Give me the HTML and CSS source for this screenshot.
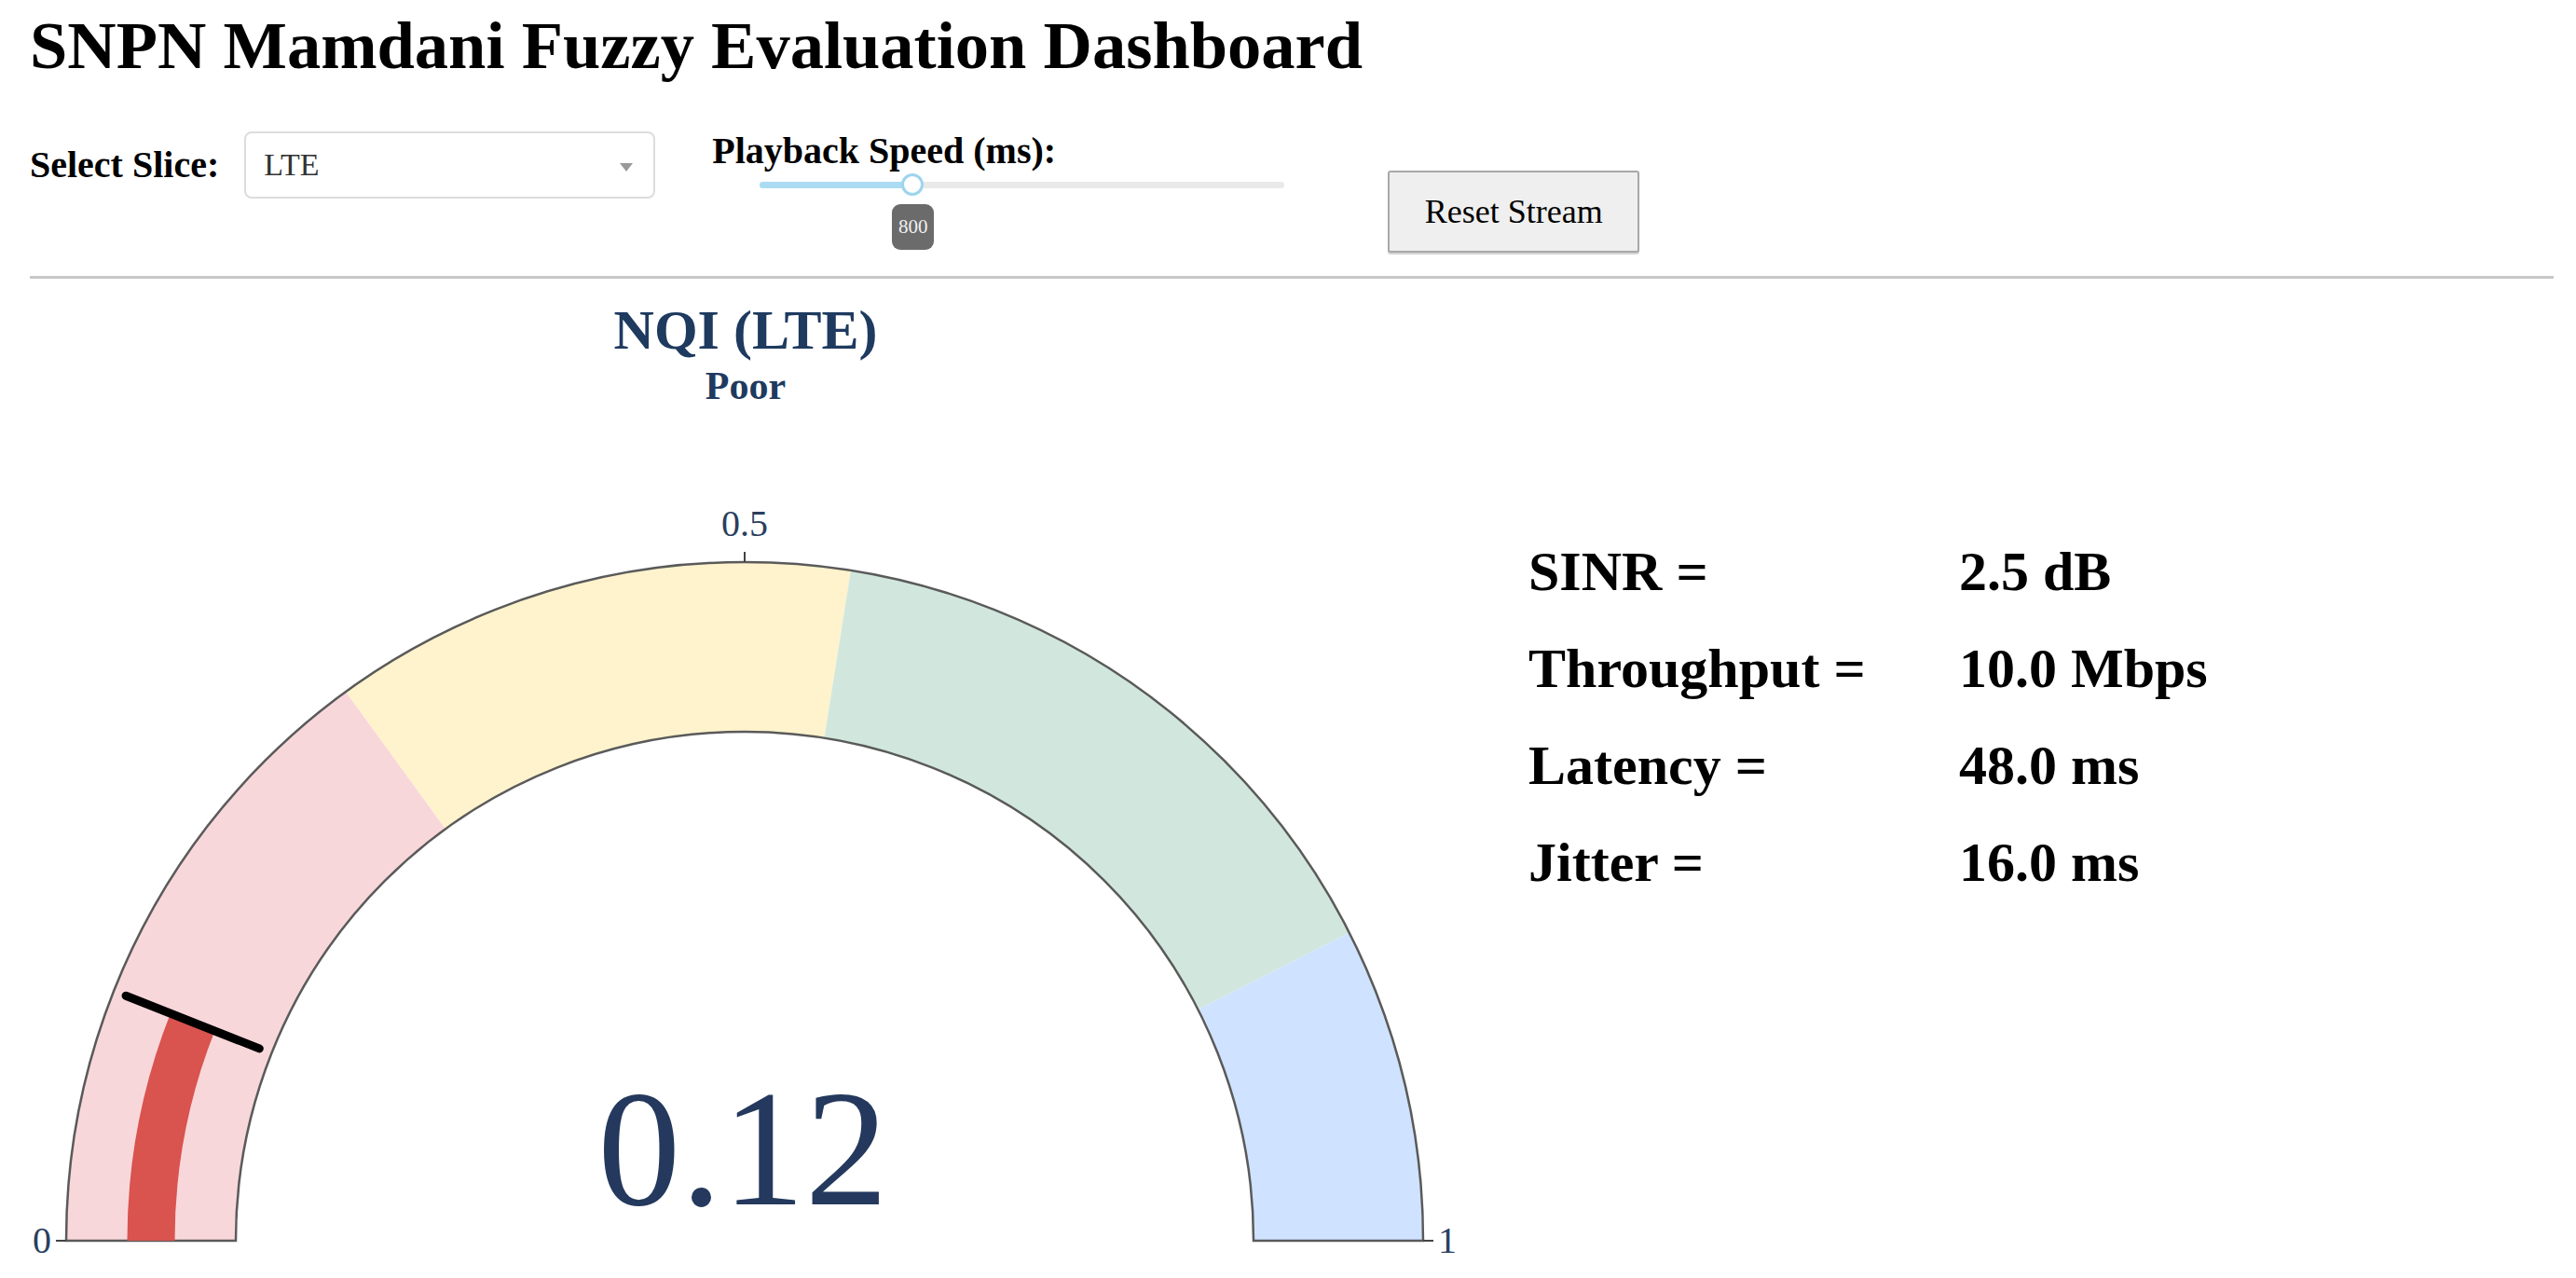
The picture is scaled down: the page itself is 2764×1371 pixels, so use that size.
FILE: index.html
```html
<!DOCTYPE html>
<html lang="en">
<head>
<meta charset="utf-8">
<title>SNPN Mamdani Fuzzy Evaluation Dashboard</title>
<link rel="stylesheet" href="styles.css">
</head>
<body>
<div class="page">
  <h1 class="title">SNPN Mamdani Fuzzy Evaluation Dashboard</h1>

  <div class="controls">
    <div class="slice-group">
      <label class="ctl-label">Select Slice:</label>
      <div class="dropdown">
        <span class="dd-value">LTE</span>
        <span class="dd-arrow"></span>
      </div>
    </div>

    <div class="speed-group">
      <div class="ctl-label">Playback Speed (ms):</div>
      <div class="slider">
        <div class="track"><div class="track-fill"></div></div>
        <div class="handle"></div>
        <div class="tip">800</div>
      </div>
    </div>

    <button class="reset-btn">Reset Stream</button>
  </div>

  <hr class="divider">

  <div class="main">
    <svg class="gauge" width="1580" height="1071" viewBox="0 0 1580 1071" xmlns="http://www.w3.org/2000/svg">
      <text class="g-title" x="768" y="74">NQI (LTE)</text>
      <text class="g-sub" x="768" y="128">Poor</text>

      <!-- steps -->
      <path class="step-red" d="M 39 1031 A 728 728 0 0 1 339.1 442.0 L 446.1 589.3 A 546 546 0 0 0 221 1031 Z"/>
      <path class="step-yellow" d="M 339.1 442.0 A 728 728 0 0 1 880.9 312.0 L 852.4 491.7 A 546 546 0 0 0 446.1 589.3 Z"/>
      <path class="step-green" d="M 880.9 312.0 A 728 728 0 0 1 1415.7 700.5 L 1253.5 783.1 A 546 546 0 0 0 852.4 491.7 Z"/>
      <path class="step-blue" d="M 1415.7 700.5 A 728 728 0 0 1 1495 1031 L 1313 1031 A 546 546 0 0 0 1253.5 783.1 Z"/>

      <!-- outline -->
      <path class="outline" d="M 39 1031 A 728 728 0 0 1 1495 1031 L 1313 1031 A 546 546 0 0 0 221 1031 Z"/>

      <!-- bar -->
      <path class="bar" d="M 130 1031 A 637 637 0 0 1 174.7 796.5"/>

      <!-- threshold -->
      <line class="threshold" x1="103.1" y1="768.2" x2="246.3" y2="824.9"/>

      <!-- ticks -->
      <line class="tick" x1="28" y1="1031" x2="39" y2="1031"/>
      <line class="tick" x1="767" y1="292" x2="767" y2="303"/>
      <line class="tick" x1="1495" y1="1031" x2="1506" y2="1031"/>
      <text class="tick-label anchor-end" x="23" y="1044">0</text>
      <text class="tick-label anchor-mid" x="767" y="275">0.5</text>
      <text class="tick-label" x="1511" y="1044">1</text>

      <text class="g-number" x="765" y="992">0.12</text>
    </svg>

    <div class="stats">
      <div class="stat-label">SINR =</div><div class="stat-value">2.5 dB</div>
      <div class="stat-label">Throughput =</div><div class="stat-value">10.0 Mbps</div>
      <div class="stat-label">Latency =</div><div class="stat-value">48.0 ms</div>
      <div class="stat-label">Jitter =</div><div class="stat-value">16.0 ms</div>
    </div>
  </div>
</div>
</body>
</html>
```

FILE: styles.css
```css
html, body {
  margin: 0;
  padding: 0;
  background: #ffffff;
}

body {
  font-family: "Liberation Serif", "Times New Roman", serif;
  color: #000;
  overflow: hidden;
}

.page {
  padding: 0 24px 0 32px;
}

.title {
  margin: 8px 0 0 0;
  font-size: 72.5px;
  line-height: 82px;
  font-weight: bold;
}

.controls {
  display: flex;
  align-items: flex-start;
  margin-top: 49px;
}

.slice-group {
  display: flex;
  align-items: center;
  gap: 27px;
  margin-top: 2px;
}

.ctl-label {
  font-size: 40px;
  line-height: 46px;
  font-weight: bold;
  white-space: nowrap;
}

.dropdown {
  box-sizing: border-box;
  width: 441px;
  height: 72px;
  border: 2px solid #dcdcdc;
  border-radius: 8px;
  display: flex;
  align-items: center;
  justify-content: space-between;
  padding: 0 22px 0 19px;
  background: #fff;
}

.dd-value {
  font-size: 34px;
  color: #333;
}

.dd-arrow {
  width: 0;
  height: 0;
  border-left: 7px solid transparent;
  border-right: 7px solid transparent;
  border-top: 9px solid #999;
  margin-top: 4px;
}

.speed-group {
  width: 620px;
  margin-left: 61px;
}

.slider {
  position: relative;
  margin-left: 51px;
  width: 563px;
  height: 83px;
  margin-top: 0;
}

.track {
  position: relative;
  top: 10px;
  height: 7px;
  border-radius: 4px;
  background: #e9e9e9;
}

.track-fill {
  width: 164px;
  height: 7px;
  border-radius: 4px;
  background: #abdcf4;
}

.handle {
  position: absolute;
  left: 152px;
  top: 1px;
  width: 24px;
  height: 24px;
  box-sizing: border-box;
  border: 3px solid #9dd4ef;
  border-radius: 50%;
  background: #fff;
}

.tip {
  position: absolute;
  left: 142px;
  top: 34px;
  width: 45px;
  height: 49px;
  border-radius: 9px;
  background: #6b6b6b;
  color: #f0f0f0;
  font-size: 21px;
  line-height: 49px;
  text-align: center;
}

.reset-btn {
  margin-top: 44px;
  margin-left: 105px;
  width: 270px;
  height: 88px;
  box-sizing: border-box;
  background: #efefef;
  border: 2px solid #a8a8a8;
  border-radius: 3px;
  box-shadow: 0 2px 1px rgba(0, 0, 0, 0.18);
  font-family: "Liberation Serif", "Times New Roman", serif;
  font-size: 36px;
  color: #000;
  padding: 0;
}

.divider {
  margin: 25px 0 0 0;
  border: 0;
  border-top: 3px solid #c8c8c8;
  height: 0;
}

.main {
  display: flex;
  align-items: flex-start;
  margin-top: 1px;
}

.gauge {
  flex-shrink: 0;
  display: block;
}

.g-title {
  font-family: "Liberation Serif", "Times New Roman", serif;
  font-size: 60px;
  font-weight: bold;
  fill: #1e3a5f;
  text-anchor: middle;
}

.g-sub {
  font-family: "Liberation Serif", "Times New Roman", serif;
  font-size: 42px;
  font-weight: bold;
  fill: #1e3a5f;
  text-anchor: middle;
}

.step-red { fill: #f8d7da; }
.step-yellow { fill: #fff3cd; }
.step-green { fill: #d1e7dd; }
.step-blue { fill: #cfe2ff; }

.outline {
  fill: none;
  stroke: #5a5a5a;
  stroke-width: 2.5;
}

.bar {
  fill: none;
  stroke: #d9534f;
  stroke-width: 51;
}

.threshold {
  stroke: #000;
  stroke-width: 9;
  stroke-linecap: round;
}

.tick {
  stroke: #444;
  stroke-width: 2;
}

.tick-label {
  font-family: "Liberation Serif", "Times New Roman", serif;
  font-size: 40px;
  fill: #2a3f5f;
}

.anchor-end { text-anchor: end; }
.anchor-mid { text-anchor: middle; }

.g-number {
  font-family: "Liberation Serif", "Times New Roman", serif;
  font-size: 178px;
  fill: #24395d;
  text-anchor: middle;
}

.stats {
  display: grid;
  grid-template-columns: 462px auto;
  margin-left: 28px;
  padding-top: 261px;
  font-size: 60px;
  line-height: 104px;
  font-weight: bold;
}

.stat-label,
.stat-value {
  white-space: nowrap;
}
```
